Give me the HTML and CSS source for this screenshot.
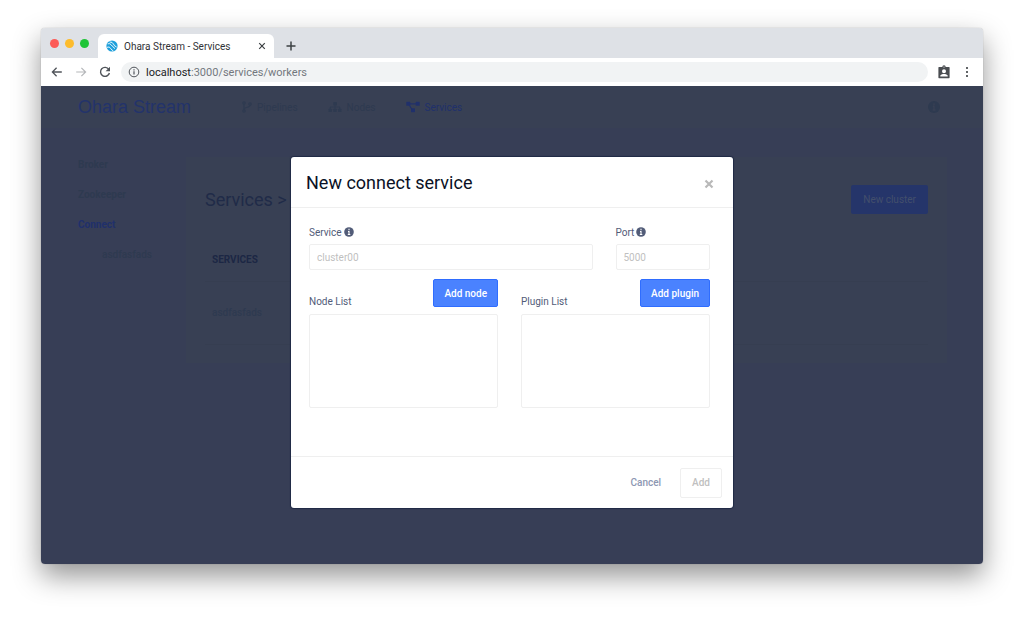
FILE: index.html
```
<!DOCTYPE html>
<html lang="en">
<head>
<meta charset="utf-8">
<meta name="viewport" content="width=device-width, initial-scale=1">
<title>Ohara Stream - Services</title>
<link rel="stylesheet" href="styles.css">
</head>
<body>
<div class="browser">
  <div class="tabstrip">
    <div class="lights"><span class="light red"></span><span class="light yellow"></span><span class="light green"></span></div>
    <div class="tab">
      <svg class="favicon" viewBox="0 0 12 12" aria-hidden="true"><circle cx="6" cy="6" r="5.6" fill="#1d9fdb"/><path d="M1.6 3.8Q4 3 5.4 5T9 8.600M3.600 2Q6.500 1.800 7.400 4T10.600 7M1 7.300Q3.400 6.200 4.600 8.300T7.300 10.800" fill="none" stroke="#fff" stroke-width=".9"/></svg>
      <span class="tab-title">Ohara Stream - Services</span>
      <button class="chrome-btn" aria-label="Close tab"><svg width="8" height="8" viewBox="0 0 8 8"><path d="M1.200 1.200l5.600 5.600M6.800 1.200L1.200 6.800" stroke="#3c4043" stroke-width="1.200"/></svg></button>
    </div>
    <button class="chrome-btn new-tab" aria-label="New tab"><svg width="10" height="10" viewBox="0 0 10 10"><path d="M5 .5v9M.5 5h9" stroke="#3c4043" stroke-width="1.500"/></svg></button>
  </div>
  <div class="toolbar">
    <div class="history">
      <button class="chrome-btn" aria-label="Back"><svg width="12" height="12" viewBox="0 0 12 12"><path d="M10.800 6H1.600M5.600 1.800L1.400 6l4.200 4.200" fill="none" stroke="#50545a" stroke-width="1.300"/></svg></button>
      <button class="chrome-btn" aria-label="Forward"><svg width="12" height="12" viewBox="0 0 12 12"><path d="M1.200 6h9.200M6.400 1.800L10.600 6l-4.200 4.200" fill="none" stroke="#b5b7ba" stroke-width="1.200"/></svg></button>
      <button class="chrome-btn" aria-label="Reload"><svg width="12" height="12" viewBox="0 0 12 12"><path d="M9.800 3.400A4.500 4.500 0 1 0 10.400 7" fill="none" stroke="#50545a" stroke-width="1.400"/><path d="M11 .8v4.400H6.600z" fill="#50545a"/></svg></button>
    </div>
    <div class="address">
      <svg width="12" height="12" viewBox="0 0 12 12" aria-hidden="true"><circle cx="6" cy="6" r="4.800" fill="none" stroke="#50545a"/><path d="M6 5.300v3.300M6 3.200v1.200" stroke="#50545a" stroke-width="1.200"/></svg>
      <span class="url"><span class="host">localhost</span>:3000/services/workers</span>
    </div>
    <button class="chrome-btn" aria-label="Profile"><svg width="12" height="14" viewBox="0 0 12 14"><path fill="#4a4d51" fill-rule="evenodd" d="M1 2h3.300a1.700 1.700 0 0 1 3.400 0H11a.6.6 0 0 1 .6.6v10a.6.6 0 0 1-.6.600H1a.6.6 0 0 1-.6-.6v-10A.6.6 0 0 1 1 2zM6 1.400a.6.6 0 1 0 0 1.200.6.6 0 0 0 0-1.200zM6 4.300a2 2 0 1 0 0 4 2 2 0 0 0 0-4zM2.300 11.500h7.400v-.7C9.700 9.500 7.400 9 6 9s-3.700.5-3.700 1.800z"/></svg></button>
    <button class="chrome-btn menu" aria-label="Menu"><svg width="4" height="12" viewBox="0 0 4 12" fill="#3c4043"><circle cx="2" cy="2" r="1.100"/><circle cx="2" cy="6" r="1.100"/><circle cx="2" cy="10" r="1.100"/></svg></button>
  </div>

  <div class="page">
    <header class="app-header">
      <a class="brand" href="#">Ohara Stream</a>
      <nav class="main-nav">
        <a href="#"><svg width="10" height="12" viewBox="0 0 10 12" fill="none" stroke="currentColor" stroke-width="1.200"><circle cx="2" cy="2" r="1.200"/><circle cx="2" cy="10" r="1.200"/><circle cx="8" cy="3" r="1.200"/><path d="M2 3.200v5.600M8 4.200C8 7 2 5.500 2 8.800"/></svg>Pipelines</a>
        <a href="#"><svg width="14" height="12" viewBox="0 0 14 12" fill="currentColor"><rect x="5.300" y="1" width="3.600" height="3.400" rx=".5"/><rect x=".5" y="7.800" width="3.400" height="3.200" rx=".5"/><rect x="5.300" y="7.800" width="3.400" height="3.200" rx=".5"/><rect x="10.100" y="7.800" width="3.400" height="3.200" rx=".5"/><path d="M7 4v4M2.200 8V6h9.600v2" fill="none" stroke="currentColor"/></svg>Nodes</a>
        <a href="#" class="active"><svg width="14" height="12" viewBox="0 0 14 12" fill="currentColor"><rect x=".3" y=".8" width="4" height="4" rx=".6"/><rect x="9.700" y=".8" width="4" height="4" rx=".6"/><rect x="5" y="7.200" width="4" height="4" rx=".6"/><path d="M4 2.800h6M3.200 4L6 8.500" fill="none" stroke="currentColor" stroke-width="1.200"/></svg>Services</a>
      </nav>
      <button class="info-btn" aria-label="Version information"><svg width="12" height="12" viewBox="0 0 12 12"><circle cx="6" cy="6" r="6" fill="#2e3a50"/><path d="M6 2.300v1.600M4.800 5.300H6v3.400M4.600 9h2.900" fill="none" stroke="#384054" stroke-width="1.400"/></svg></button>
    </header>
    <main class="content">
      <nav class="side-nav">
        <a href="#">Broker</a>
        <a href="#">Zookeeper</a>
        <a href="#" class="active">Connect</a>
        <a href="#" class="child">asdfasfads</a>
      </nav>
      <section class="card">
        <div class="card-head">
          <h1>Services &gt; Connect</h1>
          <button class="new-cluster">New cluster</button>
        </div>
        <table class="services">
          <thead><tr><th>SERVICES</th></tr></thead>
          <tbody><tr><td>asdfasfads</td></tr></tbody>
        </table>
      </section>
    </main>

    <div class="modal" role="dialog" aria-labelledby="modal-title">
      <div class="modal-head">
        <h2 id="modal-title">New connect service</h2>
        <button class="close" aria-label="Close"><svg width="10" height="10" viewBox="0 0 10 10"><path d="M1.500 1.500l7 7M8.500 1.500l-7 7" stroke="#b9b9b9" stroke-width="2.200"/></svg></button>
      </div>
      <form class="modal-body">
        <div class="row fields">
          <div class="field">
            <label for="service">Service <svg width="10" height="10" viewBox="0 0 10 10"><circle cx="5" cy="5" r="4.800" fill="#525c78"/><path d="M5 1.800v1.500M4 4.500h1v2.800M3.800 7.500h2.500" fill="none" stroke="#fff" stroke-width="1.100"/></svg></label>
            <input id="service" type="text" placeholder="cluster00">
          </div>
          <div class="field">
            <label for="port">Port <svg width="10" height="10" viewBox="0 0 10 10"><circle cx="5" cy="5" r="4.800" fill="#525c78"/><path d="M5 1.800v1.500M4 4.500h1v2.800M3.800 7.500h2.500" fill="none" stroke="#fff" stroke-width="1.100"/></svg></label>
            <input id="port" type="text" placeholder="5000">
          </div>
        </div>
        <div class="row lists">
          <div class="field">
            <div class="list-head"><span class="list-label">Node List</span><button type="button" class="primary">Add node</button></div>
            <div class="list-box"></div>
          </div>
          <div class="field">
            <div class="list-head"><span class="list-label">Plugin List</span><button type="button" class="primary">Add plugin</button></div>
            <div class="list-box"></div>
          </div>
        </div>
      </form>
      <div class="modal-foot">
        <button class="cancel">Cancel</button>
        <button class="add" disabled>Add</button>
      </div>
    </div>
  </div>
</div>
</body>
</html>
```
FILE: styles.css
```
* { box-sizing: border-box; }

body {
  margin: 0;
  min-height: 100vh;
  padding: 28px 41px 54px;
  display: flex;
  background: #fff;
  font-family: Roboto, "Liberation Sans", sans-serif;
  font-size: 10px;
}

a { color: inherit; text-decoration: none; }
button { font: inherit; border: 0; cursor: pointer; }
svg { flex: none; }

.browser {
  flex: 1;
  display: flex;
  flex-direction: column;
  border-radius: 4px;
  overflow: hidden;
  box-shadow: 0 0 1px rgba(0, 0, 0, .4), 0 12px 28px rgba(0, 0, 0, .42);
}

.tabstrip {
  display: flex;
  align-items: flex-end;
  height: 30px;
  background: #dee1e6;
}

.lights { display: flex; gap: 6px; padding: 0 9px 10px; }
.light { width: 9px; height: 9px; border-radius: 50%; }
.red { background: #fc5b57; }
.yellow { background: #fdbc2c; }
.green { background: #1fc437; }

.tab {
  display: flex;
  align-items: center;
  gap: 6px;
  width: 176px;
  height: 24px;
  padding: 0 8px;
  border-radius: 6px 6px 0 0;
  background: #fff;
}
.favicon { width: 12px; height: 12px; }
.tab-title { flex: 1; color: #303236; white-space: nowrap; }

.chrome-btn { display: flex; padding: 0; background: none; }
.new-tab { padding: 0 0 7px 12px; }

.toolbar {
  display: flex;
  align-items: center;
  height: 28px;
  padding: 0 14px 0 10px;
  background: #fff;
}
.history { display: flex; gap: 12px; }
.address {
  flex: 1;
  display: flex;
  align-items: center;
  gap: 6px;
  height: 20px;
  margin: 0 10px;
  padding: 0 7px;
  border-radius: 10px;
  background: #f1f3f4;
  font-size: 11px;
}
.url { color: #73787e; }
.host { color: #202124; }
.menu { margin-left: 15px; }

.page {
  position: relative;
  flex: 1;
  background: #373e56;
  color: #2e3a50;
}

.app-header {
  display: flex;
  align-items: center;
  height: 42px;
  padding: 0 43px 0 37px;
  background: #384054;
}
.brand {
  color: #23336b;
  font-family: "Liberation Sans", Arial, sans-serif;
  font-size: 18px;
}
.main-nav { display: flex; gap: 30px; flex: 1; margin-left: 51px; }
.main-nav a { display: flex; align-items: center; gap: 5px; }
.main-nav .active, .side-nav .active { color: #20306b; }
.info-btn { display: flex; padding: 0; background: none; }

.content { display: flex; padding: 29px 36px 0 37px; }
.side-nav {
  display: flex;
  flex-direction: column;
  gap: 14px;
  width: 108px;
  font-weight: 700;
  line-height: 16px;
}
.side-nav .child { padding-left: 24px; font-weight: 500; }

.card { flex: 1; padding: 28px 19px 18px; background: #384054; }
.card-head { display: flex; justify-content: space-between; align-items: center; }
.card h1 { margin: 0; color: #202b48; font-size: 18px; font-weight: 400; }
.new-cluster {
  height: 29px;
  padding: 0 12px;
  border-radius: 2px;
  background: #25356a;
  color: #434f6c;
  font-weight: 400;
}

.services { width: 100%; margin-top: 24px; border-collapse: collapse; text-align: left; }
.services th, .services td { padding: 0 7px; border-bottom: 1px solid #363e51; }
.services th { height: 43px; color: #1c2744; font-weight: 700; }
.services td { height: 63px; font-weight: 500; }

.modal {
  position: absolute;
  top: 71px;
  left: 50%;
  width: 442px;
  transform: translateX(-50%);
  border-radius: 3px;
  background: #fff;
  box-shadow: 0 0 1px 1px #202a45;
}
.modal-head {
  display: flex;
  align-items: center;
  justify-content: space-between;
  height: 51px;
  padding: 0 19px 0 15px;
  border-bottom: 1px solid #efefef;
}
.modal h2 { margin: 0; color: #0a1125; font-size: 18px; font-weight: 400; }
.close { display: flex; padding: 3px 0 0; background: none; }

.modal-body { padding: 18px 23px 48px 18px; color: #525c78; }
.row { display: grid; column-gap: 23px; }
.fields { grid-template-columns: 3fr 1fr; }
.lists { grid-template-columns: 1fr 1fr; margin-top: 9px; }
.field { min-width: 0; }
.field label { display: flex; align-items: center; gap: 2px; height: 12px; margin-bottom: 6px; }
.field input {
  display: block;
  width: 100%;
  height: 26px;
  padding: 0 7px;
  border: 1px solid #efefef;
  border-radius: 2px;
  font: inherit;
}
.field input::placeholder { color: #bfbfbf; }
.list-head { display: flex; align-items: flex-end; justify-content: space-between; height: 28px; margin-bottom: 7px; }
.primary {
  height: 28px;
  padding: 0 10px;
  border: 1px solid #2f6dff;
  border-radius: 2px;
  background: #4a82ff;
  color: #fff;
  font-weight: 500;
}
.list-box { height: 94px; border: 1px solid #efefef; border-radius: 2px; }

.modal-foot {
  display: flex;
  align-items: center;
  justify-content: flex-end;
  gap: 8px;
  height: 52px;
  padding: 0 11px;
  border-top: 1px solid #efefef;
}
.cancel { height: 30px; padding: 0 11px; background: none; color: #8d97b2; font-weight: 500; }
.add {
  height: 30px;
  padding: 0 11px;
  border: 1px solid #efefef;
  border-radius: 2px;
  background: #fff;
  color: #c0c0c0;
  font-weight: 500;
}
```
